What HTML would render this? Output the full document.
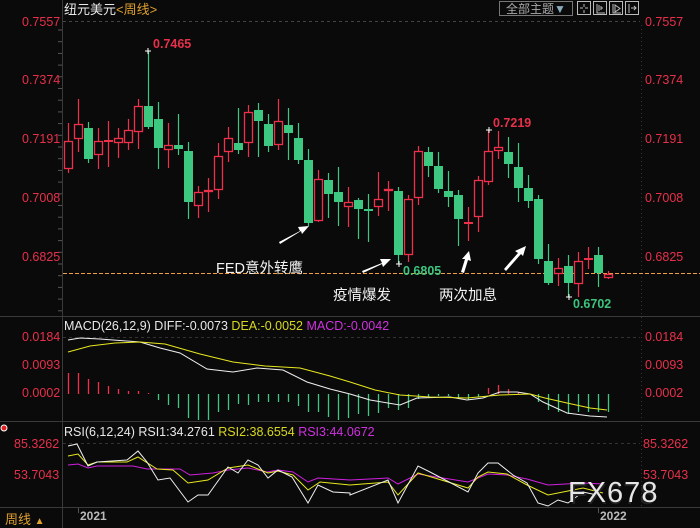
<!DOCTYPE html>
<html><head><meta charset="utf-8"><style>
html,body{margin:0;padding:0;background:#0a0a0a;width:700px;height:528px;overflow:hidden}
svg{display:block}
text{font-family:"Liberation Sans","Noto Sans CJK SC",sans-serif}
</style></head><body>
<svg id="s" width="700" height="528" viewBox="0 0 700 528" xmlns="http://www.w3.org/2000/svg">
<rect width="700" height="528" fill="#0a0a0a"/>
<line x1="62.5" y1="0" x2="62.5" y2="528" stroke="#3a3a3a"/>
<line x1="0" y1="316.5" x2="700" y2="316.5" stroke="#3a3a3a"/>
<line x1="0" y1="421.5" x2="700" y2="421.5" stroke="#3a3a3a"/>
<line x1="0" y1="507.5" x2="700" y2="507.5" stroke="#3a3a3a"/>
<line x1="641.5" y1="25" x2="641.5" y2="506" stroke="#333" stroke-dasharray="1,3"/>
<line x1="63" y1="21.5" x2="640" y2="21.5" stroke="#444" stroke-dasharray="3,3"/>
<line x1="63" y1="337.5" x2="640" y2="337.5" stroke="#333" stroke-dasharray="3,3"/>
<line x1="63" y1="443.5" x2="640" y2="443.5" stroke="#333" stroke-dasharray="3,3"/>
<line x1="63" y1="273.5" x2="700" y2="273.5" stroke="#f0a040" stroke-dasharray="4,2"/>
<g id="ticks"></g>
<text x="64" y="14" font-size="13" fill="#e8e8e8">纽元美元<tspan fill="#e0a030">&lt;周线&gt;</tspan></text>
<rect x="499.5" y="1.5" width="73" height="14" fill="none" stroke="#777"/>
<text x="506" y="13" font-size="12" fill="#aaa">全部主题<tspan fill="#8ab">▼</tspan></text>
<g fill="none" stroke="#bbb">
<rect x="577.5" y="1.5" width="13" height="13"/><rect x="593.5" y="1.5" width="13" height="13"/>
<rect x="609.5" y="1.5" width="13" height="13"/><rect x="625.5" y="1.5" width="13" height="13"/>
<path d="M584 4v3M584 10v3M580 8h3M585 8h3"/>
<path d="M597 4v9h8M599 5v6M601 6v4M603 8h-2"/>
<path d="M613 4v9h8M615 5v7l5-3.5z"/>
<path d="M629 4v9M631 8h5M634 6l2 2-2 2"/>
</g>
<g font-size="12.5" fill="#e8304a">
<text x="22" y="26">0.7557</text><text x="22" y="84">0.7374</text><text x="22" y="143">0.7191</text>
<text x="22" y="202">0.7008</text><text x="22" y="261">0.6825</text>
<text x="645" y="26">0.7557</text><text x="645" y="84">0.7374</text><text x="645" y="143">0.7191</text>
<text x="645" y="202">0.7008</text><text x="645" y="261">0.6825</text>
<text x="22" y="341">0.0184</text><text x="22" y="369">0.0093</text><text x="22" y="397">0.0002</text>
<text x="645" y="341">0.0184</text><text x="645" y="369">0.0093</text><text x="645" y="397">0.0002</text>
<text x="14" y="448">85.3262</text><text x="14" y="479">53.7043</text>
<text x="643" y="448">85.3262</text><text x="643" y="479">53.7043</text>
</g>
<g id="cand"></g>
<g id="hist"></g>
<path d="M145 51h6M148 48v6M486 130h6M489 127v6M396 264h6M399 261v6M566 297h6M569 294v6" stroke="#fff"/>
<g font-size="12.5" font-weight="bold">
<text x="153" y="48" fill="#e8304a">0.7465</text>
<text x="493" y="127" fill="#e8304a">0.7219</text>
<text x="403" y="275" fill="#3cc47f">0.6805</text>
<text x="573" y="308" fill="#3cc47f">0.6702</text>
</g>
<g font-size="14.5" fill="#f2f2f2">
<text x="216" y="273">FED意外转鹰</text>
<text x="333" y="300">疫情爆发</text>
<text x="439" y="300">两次加息</text>
</g>
<g fill="#fff">
<path d="M279 242l21-11-2-4 11-1-7 8-1-3-21 13z"/>
<path d="M362 271l20-8-2-4 11 0-8 8-1-3-19 9z"/>
<path d="M461 272l4-13-3 0 7-8 2 10-3-1-4 13z"/>
<path d="M504 269l14-16-3-2 11-5-3 10-2-2-15 17z"/>
</g>
<text x="64" y="330" font-size="12.5"><tspan fill="#e8e8e8">MACD(26,12,9) DIFF:-0.0073 </tspan><tspan fill="#d8d820">DEA:-0.0052 </tspan><tspan fill="#d030e0">MACD:-0.0042</tspan></text>
<polyline fill="none" stroke="#f0f0f0" points="68,340 80,338 100,339 140,342 160,348 180,353 207,369 233,372 257,368 283,370 307,382 330,389 350,394 370,400 400,405 417,398 450,397 467,400 483,398 500,392 517,392 530,394 543,402 567,413 590,416 607,417"/>
<polyline fill="none" stroke="#e8e820" points="68,352 90,346 115,343 140,342 165,344 200,354 233,362 265,366 300,368 330,376 350,382 375,390 400,395 430,397 467,398 500,395 530,394 545,398 567,403 590,408 607,410"/>
<text x="64" y="436" font-size="12.5"><tspan fill="#e8e8e8">RSI(6,12,24) RSI1:34.2761 </tspan><tspan fill="#d8d820">RSI2:38.6554 </tspan><tspan fill="#d030e0">RSI3:44.0672</tspan></text>
<polyline fill="none" stroke="#d020e0" points="68,465 78,464 88,468 97,466 133,466 147,469 180,469 190,475 213,473 228,470 248,468 267,472 278,470 293,472 308,482 318,478 350,480 388,478 398,484 418,474 468,482 488,474 507,475 527,479 548,485 583,483 603,484"/>
<polyline fill="none" stroke="#e8e820" points="68,456 78,454 88,465 97,462 127,462 138,457 157,469 173,470 188,483 208,480 228,468 248,465 268,473 278,471 293,475 308,490 320,482 350,485 388,482 398,495 418,473 468,488 478,477 488,472 507,474 527,485 548,495 563,492 583,488 603,493"/>
<polyline fill="none" stroke="#f0f0f0" points="68,446 77,444 88,466 97,462 127,460 138,451 147,462 158,480 170,478 188,502 198,495 208,495 228,467 238,473 248,460 258,465 268,478 278,470 292,477 308,503 318,485 333,492 350,493 350,495 388,480 398,503 418,466 430,472 468,492 478,473 488,463 498,463 513,475 527,483 538,503 548,506 558,500 568,503 583,492 597,495"/>
<circle cx="4" cy="428" r="3" fill="#e02020" stroke="#fff" stroke-width="1"/>
<text x="570" y="504" font-size="29" fill="#222">FX678</text>
<text x="568" y="502" font-size="29" fill="#e6e6e6" letter-spacing="1">FX678</text>
<text x="5" y="524" font-size="13" fill="#e0a030">周线 <tspan font-size="10">▲</tspan></text>
<text x="80" y="520" font-size="12" font-weight="bold" fill="#bbb">2021</text>
<text x="600" y="520" font-size="12" font-weight="bold" fill="#bbb">2022</text>
<line x1="78.5" y1="508" x2="78.5" y2="513" stroke="#555"/><line x1="598.5" y1="508" x2="598.5" y2="513" stroke="#555"/>
</svg>
<script>
var NS="http://www.w3.org/2000/svg";
function el(p,n,a){var e=document.createElementNS(NS,n);for(var k in a)e.setAttribute(k,a[k]);p.appendChild(e);return e;}
var C=[[141,169,123,173,1],[124,139,99,152,1],[128,159,122,163,0],[141,155,128,169,1],[140,141,121,167,1],[138,143,128,158,1],[130,143,119,150,1],[106,132,99,149,1],[106,127,51,129,0],[119,148,102,169,0],[145,150,123,168,1],[145,149,114,155,0],[151,202,142,219,0],[192,206,186,218,1],[190,192,178,212,1],[156,190,143,199,1],[138,152,127,162,1],[143,150,108,154,0],[112,143,105,157,1],[110,121,103,157,0],[124,146,114,152,0],[121,145,99,150,1],[125,133,108,160,0],[138,160,123,164,0],[160,223,149,226,0],[179,221,170,222,1],[180,194,173,218,0],[192,202,167,226,0],[202,207,187,227,1],[200,209,198,239,0],[209,210,194,242,0],[199,207,172,216,1],[189,191,181,211,1],[191,255,187,264,0],[199,255,195,262,1],[151,198,146,205,1],[152,166,147,177,0],[166,189,152,193,0],[191,197,171,207,0],[195,219,190,246,0],[222,223,207,241,1],[180,217,176,232,1],[151,182,130,185,1],[147,151,131,159,1],[152,164,137,178,0],[167,188,143,202,0],[188,201,175,208,0],[199,259,195,264,0],[261,283,244,285,0],[268,274,258,286,1],[266,283,255,297,0],[261,284,252,297,1],[258,259,247,269,1],[255,273,247,287,0],[274,278,271,279,1]];
var g=document.getElementById("cand");
C.forEach(function(c,i){var x=68+i*10,col=c[4]?"#f0304a":"#3cc880";
 el(g,"line",{x1:x+.5,x2:x+.5,y1:c[2],y2:c[3],stroke:col,"stroke-width":1.2});
 if(c[4]){ if(c[1]-c[0]<2) el(g,"rect",{x:x-4,y:c[0],width:9,height:2,fill:col});
  else el(g,"rect",{x:x-3.5,y:c[0]+.5,width:8,height:c[1]-c[0]-1,fill:"#0a0a0a",stroke:col,"stroke-width":1.3});}
 else el(g,"rect",{x:x-4,y:c[0],width:9,height:Math.max(2,c[1]-c[0]),fill:col});
});
var H=[373,373,379,382,386,389,391,391,393,400,405,408,418,420,420,412,410,404,405,402,402,402,402,406,412,412,417,420,418,414,416,413,408,410,408,399,397,396,396,398,400,397,388,385,389,392,394,402,410,412,414,412,412,412,412];
var h=document.getElementById("hist");
H.forEach(function(y,i){var x=68+i*10+.5;el(h,"line",{x1:x,x2:x,y1:Math.min(y,394),y2:Math.max(y,394),stroke:y<394?"#f0304a":"#3cc880","stroke-width":1.3});});
var t=document.getElementById("ticks");
for(var y=30;y<316;y+=11.7)el(t,"line",{x1:58,x2:62,y1:y,y2:y,stroke:"#555"});
</script>
</body></html>
